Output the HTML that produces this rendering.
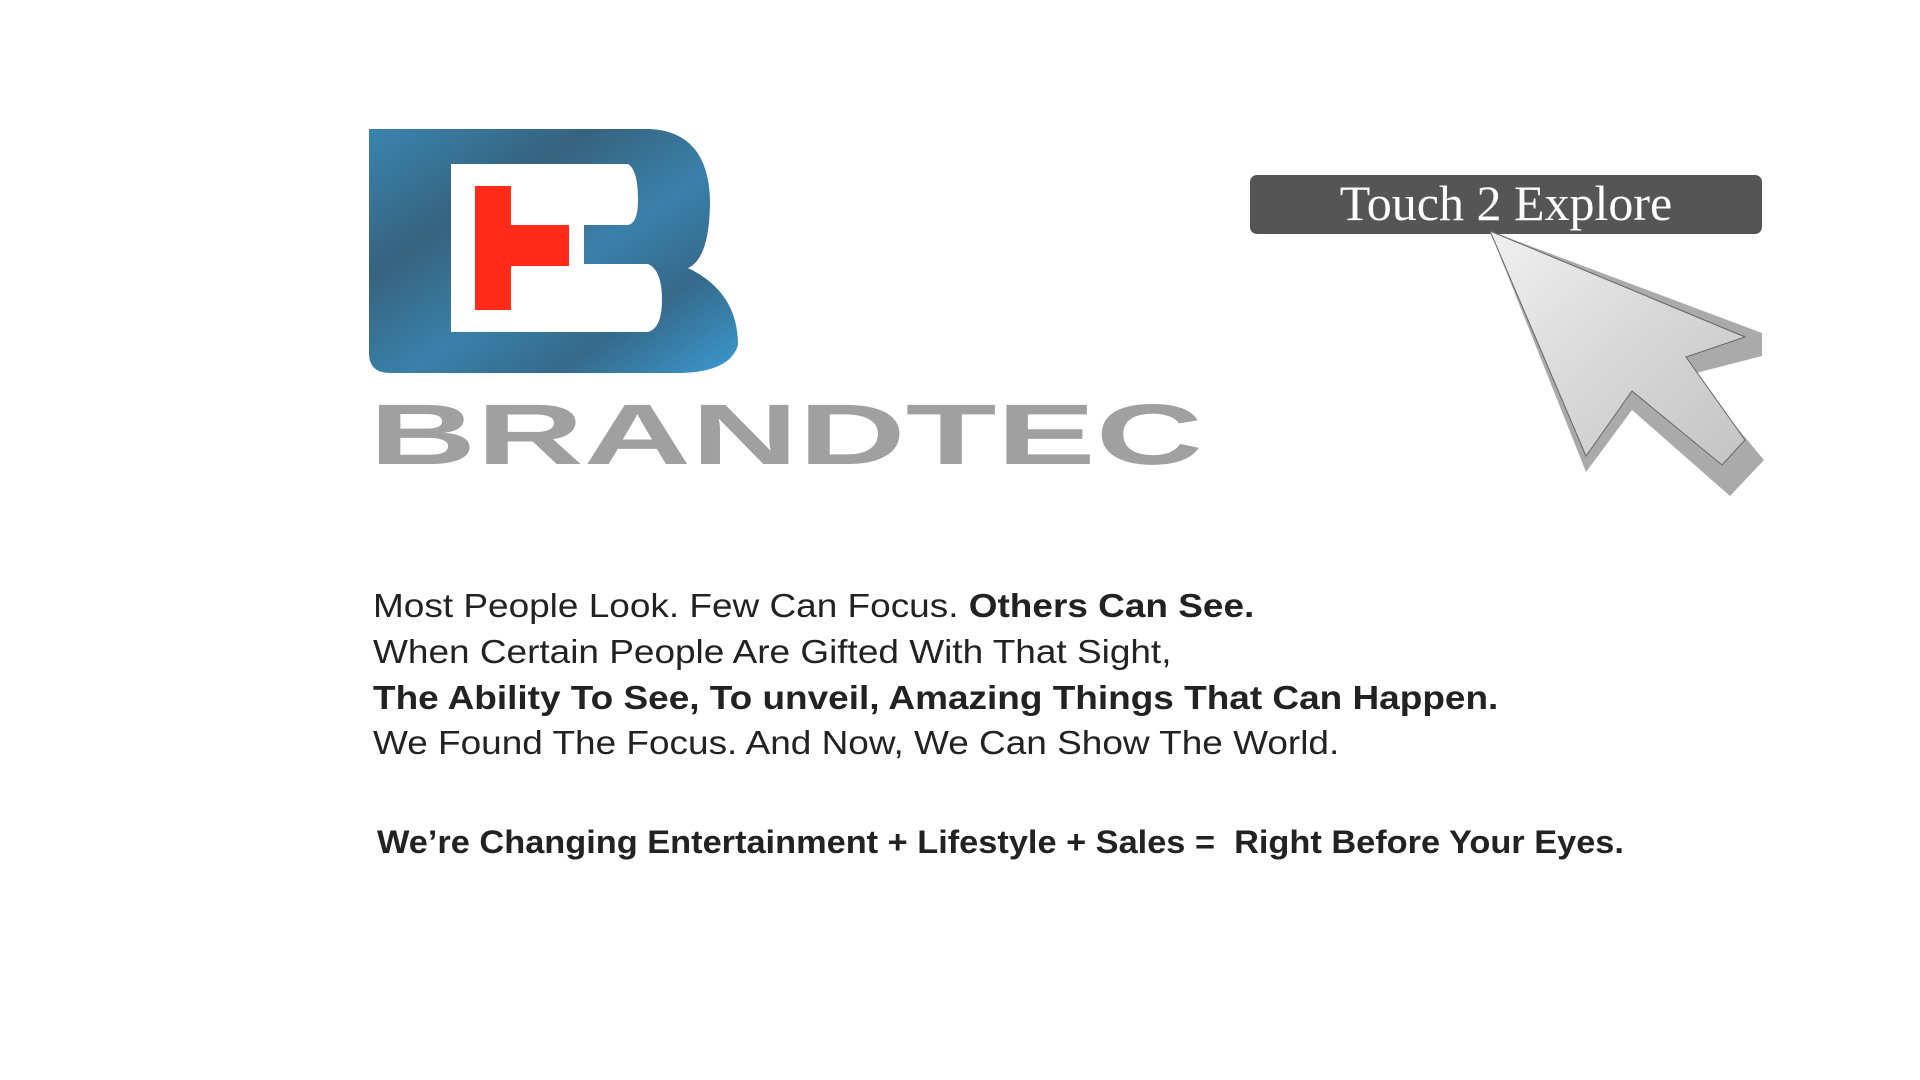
<!DOCTYPE html>
<html><head><meta charset="utf-8"><style>
html,body{margin:0;padding:0;background:#fff;width:1920px;height:1080px;overflow:hidden;position:relative;font-family:"Liberation Sans",sans-serif}
.t{position:absolute;left:373px;color:#222;font-size:33px;white-space:nowrap;line-height:1;transform:scaleX(1.12);transform-origin:0 0}
.b{font-weight:bold}
</style></head><body>
<svg width="1920" height="1080" style="position:absolute;left:0;top:0">
<defs>
<linearGradient id="g" x1="0" y1="0" x2="1" y2="1">
<stop offset="0" stop-color="#3a84b0"/>
<stop offset="0.3" stop-color="#36637e"/>
<stop offset="0.55" stop-color="#3a80aa"/>
<stop offset="0.75" stop-color="#36698a"/>
<stop offset="1" stop-color="#3b9ad0"/>
</linearGradient>
<linearGradient id="c" x1="0" y1="0" x2="1" y2="1">
<stop offset="0" stop-color="#f0f0f0"/>
<stop offset="0.5" stop-color="#d8d8d8"/>
<stop offset="1" stop-color="#c4c4c4"/>
</linearGradient>
</defs>
<path d="M369 129 H650 Q708 132 710 200 Q710 258 688 268 Q738 292 738 345 Q730 372 680 373 H390 Q369 373 369 353 Z" fill="url(#g)"/>
<path d="M451 164 H628 Q638 170 638 200 Q638 223 628 225 H584 V264 H648 Q662 270 662 300 Q662 328 648 332 H451 Z" fill="#fff"/>
<path d="M475 186 H511 V225 H569 V266 H511 V310 H475 Z" fill="#ff2b18"/>
<text x="369" y="464" font-family="Liberation Sans" font-weight="bold" font-size="86" fill="#a0a0a0" textLength="834" lengthAdjust="spacingAndGlyphs">BRANDTEC</text>
<rect x="1250" y="175" width="512" height="59" rx="7" fill="#555"/>
<text x="1506" y="220" text-anchor="middle" font-family="Liberation Serif" font-size="50" fill="#fff">Touch 2 Explore</text>
<path d="M1490 231 L1762 333 L1762 356 L1692 374 L1764 460 L1730 496 L1632 410 L1586 472 Z" fill="#aaa"/>
<path d="M1490 231 L1745 337 L1686 357 L1745 440 L1722 465 L1632 391 L1586 456 Z" fill="url(#c)" stroke="#666" stroke-width="1"/>
</svg>
<div class="t" style="top:589px">Most People Look. Few Can Focus. <span class="b">Others Can See.</span></div>
<div class="t" style="top:635px">When Certain People Are Gifted With That Sight,</div>
<div class="t b" style="top:681px">The Ability To See, To unveil, Amazing Things That Can Happen.</div>
<div class="t" style="top:726px">We Found The Focus. And Now, We Can Show The World.</div>
<div class="t b" style="top:826px;left:377px;font-size:32px;transform:scaleX(1.073)">We’re Changing Entertainment + Lifestyle + Sales =&nbsp; Right Before Your Eyes.</div>
</body></html>
